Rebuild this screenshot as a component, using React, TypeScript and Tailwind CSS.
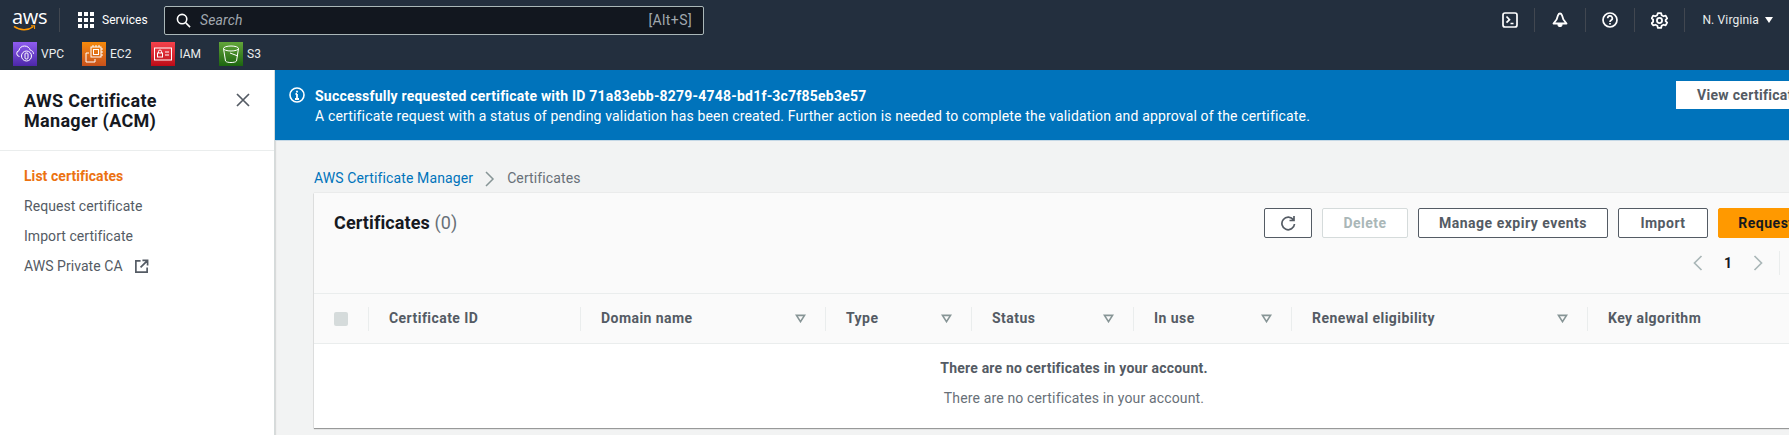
const font = "font-['Roboto','Open_Sans',sans-serif]";

const services = [
  { name: "VPC", bg: "bg-gradient-to-t from-[#4d27a8] to-[#8f5cf0]", gap: "mr-[18px]", icon: "vpc" },
  { name: "EC2", bg: "bg-gradient-to-t from-[#c8511b] to-[#f58a0a]", gap: "mr-[20px]", icon: "ec2" },
  { name: "IAM", bg: "bg-gradient-to-t from-[#bd0816] to-[#f5414b]", gap: "mr-[18px]", icon: "iam" },
  { name: "S3", bg: "bg-gradient-to-t from-[#1b660f] to-[#62a53a]", gap: "", icon: "s3" },
];

const columns = [
  { label: "Certificate ID", width: "w-[212px]", filter: false },
  { label: "Domain name", width: "w-[245px]", filter: true },
  { label: "Type", width: "w-[146px]", filter: true },
  { label: "Status", width: "w-[162px]", filter: true },
  { label: "In use", width: "w-[158px]", filter: true },
  { label: "Renewal eligibility", width: "w-[296px]", filter: true },
  { label: "Key algorithm", width: "w-[200px]", filter: false },
];

const ServiceIcon = ({ kind }: { kind: string }) => {
  if (kind === "vpc")
    return (
      <svg viewBox="0 0 24 24" className="w-6 h-6" fill="none" stroke="white" strokeWidth="1">
        <path d="M6.5 14.5A3 3 0 0 1 6 8.6C6.4 5.8 8.6 4 11.5 4c2.8 0 5 1.7 5.8 4.2 2 .4 3.2 1.8 3.2 3.6" />
        <circle cx="13.5" cy="14" r="5" />
        <rect x="12" y="11" width="3" height="6" rx="1" />
      </svg>
    );
  if (kind === "ec2")
    return (
      <svg viewBox="0 0 24 24" className="w-6 h-6" fill="none" stroke="white" strokeWidth="1">
        <rect x="9" y="5" width="10" height="10" />
        <rect x="11.5" y="7.5" width="5" height="5" />
        <path d="M7 11H4v9h9v-3" />
        <path d="M11 3v2M14 3v2M17 3v2M19 7h2M19 10h2M19 13h2" />
      </svg>
    );
  if (kind === "iam")
    return (
      <svg viewBox="0 0 24 24" className="w-6 h-6" fill="none" stroke="white" strokeWidth="1">
        <rect x="3.5" y="6" width="17" height="12" />
        <rect x="6.5" y="11" width="5" height="4" />
        <path d="M7.5 11V9.5a1.5 1.5 0 0 1 3 0V11M14 10h4M14 13h4" />
      </svg>
    );
  return (
    <svg viewBox="0 0 24 24" className="w-6 h-6" fill="none" stroke="white" strokeWidth="1">
      <ellipse cx="12" cy="6.5" rx="7.5" ry="2.5" />
      <path d="M4.5 6.5 6.5 19c.5 1 3 1.5 5.5 1.5s5-.5 5.5-1.5l2-12.5" />
      <path d="M11 11l8 3" />
    </svg>
  );
};

const FilterCaret = () => (
  <svg viewBox="0 0 12 10" className="w-[11px] h-[9px]" fill="none" stroke="#879596" strokeWidth="1.8">
    <path d="M1.5 1.5h9L6 8.5z" />
  </svg>
);

const Button = ({ label, className }: { label: string; className: string }) => (
  <button className={`h-[30px] rounded-[2px] border text-[14px] font-bold tracking-[0.5px] ${className}`}>{label}</button>
);

export default function App() {
  return (
    <div className={`w-[1789px] h-[435px] overflow-hidden flex flex-col bg-[#f2f3f3] text-[14px] tracking-[0.15px] ${font}`}>
      <header className="h-[70px] shrink-0 bg-[#232f3e] text-white flex flex-col">
        <div className="h-[40px] flex items-center">
          <div className="w-[60px] h-[24px] pl-[12px] border-r border-[#414750] flex flex-col">
            <span className="text-[20px] leading-[17px] tracking-[-0.3px] font-['Open_Sans',sans-serif]">aws</span>
            <svg viewBox="0 0 26 8" className="w-[25px] h-[8px]" fill="none">
              <path d="M1 1.5c7 5 16 5 22 .5" stroke="#ff9900" strokeWidth="1.7" />
              <path d="M20.5 1h4v3.5" stroke="#ff9900" strokeWidth="1.2" />
            </svg>
          </div>
          <div className="ml-[18px] grid grid-cols-3 gap-[2px] w-[16px]">
            {Array.from({ length: 9 }).map((_, i) => (
              <span key={i} className="w-[4px] h-[4px] bg-white" />
            ))}
          </div>
          <span className="ml-[8px] w-[62px] text-[12px] tracking-[0.05px]">Services</span>
          <div className="w-[540px] h-[29px] border border-[#aab7b8] rounded-[2px] flex items-center px-[11px] bg-[#12171f]">
            <svg viewBox="0 0 16 16" className="w-[15px] h-[15px]" fill="none" stroke="white" strokeWidth="1.7">
              <circle cx="6.5" cy="6.5" r="5" />
              <path d="M10.5 10.5 15 15" />
            </svg>
            <span className="ml-[9px] italic text-[#a0a7ae]">Search</span>
            <span className="ml-auto text-[#a0a7ae] tracking-[0.4px]">[Alt+S]</span>
          </div>
          <div className="ml-auto flex items-center">
            <div className="w-[50px] h-[24px] flex items-center justify-center border-r border-[#414750]">
              <svg viewBox="0 0 16 16" className="w-[16px] h-[16px]" fill="none" stroke="white" strokeWidth="1.7">
                <rect x="1" y="1" width="14" height="14" rx="2" />
                <path d="m4.5 4.5 3 3.2-3 3M8.5 11.5h3" />
              </svg>
            </div>
            <div className="w-[51px] h-[24px] flex items-center justify-center border-r border-[#414750]">
              <svg viewBox="0 0 16 16" className="w-[16px] h-[16px]" fill="none" stroke="white" strokeWidth="1.8">
                <path d="M8 1.5c-1 0-1.5.6-2 1.8L4.6 7.5 1.5 11.5h13l-3.1-4L10 3.3C9.5 2.1 9 1.5 8 1.5z" strokeLinejoin="round" />
                <path d="M5.8 12.5a2.2 2.2 0 0 0 4.4 0z" fill="white" strokeWidth="1" />
              </svg>
            </div>
            <div className="w-[49px] h-[24px] flex items-center justify-center border-r border-[#414750]">
              <svg viewBox="0 0 16 16" className="w-[16px] h-[16px]" fill="none" stroke="white" strokeWidth="1.7">
                <circle cx="8" cy="8" r="7" />
                <path d="M5.7 6.2a2.3 2.3 0 1 1 3.4 2c-.8.5-1.1.9-1.1 1.8" />
                <path d="M8 11v1.5" />
              </svg>
            </div>
            <div className="w-[50px] h-[24px] flex items-center justify-center border-r border-[#414750]">
              <svg viewBox="0 0 16 16" className="w-[17px] h-[17px]" fill="none" stroke="white" strokeWidth="1.7">
                <path d="M6.5 1h3l.5 2 1.8 1 2-.6 1.4 2.6-1.4 1.4v1.2l1.4 1.4-1.4 2.6-2-.6-1.8 1-.5 2h-3l-.5-2-1.8-1-2 .6L.6 10.6 2 9.2V7L.6 6l1.4-2.6 2 .6L5.8 3z" strokeLinejoin="round" />
                <circle cx="8" cy="8" r="2.4" />
              </svg>
            </div>
            <span className="ml-[17px] text-[12px] text-[#eaeded]">N. Virginia</span>
            <span className="ml-[6px] mr-[16px] w-0 h-0 border-x-[4px] border-x-transparent border-t-[6px] border-t-white" />
          </div>
        </div>
        <div className="h-[30px] flex items-start pl-[13px] pt-[2px]">
          {services.map((s) => (
            <div key={s.name} className={`flex items-center ${s.gap}`}>
              <span className={`w-6 h-6 ${s.bg}`}>
                <ServiceIcon kind={s.icon} />
              </span>
              <span className="ml-[4px] text-[12px] tracking-normal text-[#eaeded]">{s.name}</span>
            </div>
          ))}
        </div>
      </header>

      <div className="flex-1 flex min-h-0">
        <aside className="w-[275px] shrink-0 bg-white border-r border-[#d5dbdb] shadow-[1px_0_1px_rgba(0,0,0,0.1)]">
          <div className="h-[81px] pl-[24px] pr-[23px] pt-[21px] border-b border-[#eaeded] flex justify-between">
            <h2 className="text-[18px] leading-[20px] font-bold tracking-[0.3px] text-[#16191f]">
              AWS Certificate
              <br />
              Manager (ACM)
            </h2>
            <svg viewBox="0 0 16 16" className="w-[16px] h-[16px] mt-[1px]" fill="none" stroke="#545b64" strokeWidth="1.7">
              <path d="m2 2 12 12M14 2 2 14" />
            </svg>
          </div>
          <nav className="pl-[24px] pt-[10px] flex flex-col tracking-[0.05px] text-[#545b64]">
            <a className="h-[30px] leading-[30px] font-bold text-[#ec7211]">List certificates</a>
            <a className="h-[30px] leading-[30px]">Request certificate</a>
            <a className="h-[30px] leading-[30px]">Import certificate</a>
            <a className="h-[30px] leading-[30px] flex items-center">
              AWS Private CA
              <svg viewBox="0 0 16 16" className="w-[15px] h-[15px] ml-[11px]" fill="none" stroke="#545b64" strokeWidth="1.8">
                <path d="M7 2H2v12h12V9M9 1.5h5.5V7M14.5 1.5 7 9" />
              </svg>
            </a>
          </nav>
        </aside>

        <main className="flex-1 min-w-0 overflow-hidden">
          <div className="h-[71px] bg-[#0073bb] text-white flex border-b border-[#c5d8e6] pl-[14px] pt-[16px] relative">
            <svg viewBox="0 0 16 16" className="w-[16px] h-[16px] mt-[1px]" fill="none" stroke="white" strokeWidth="1.6">
              <circle cx="8" cy="8" r="7" />
              <path d="M8 7v5M6 12h4M8 3.8v1.8M6.5 7H8" strokeWidth="1.8" />
            </svg>
            <div className="ml-[10px] leading-[20px]">
              <div className="font-bold tracking-[0.21px]">Successfully requested certificate with ID 71a83ebb-8279-4748-bd1f-3c7f85eb3e57</div>
              <div className="tracking-[0.165px]">A certificate request with a status of pending validation has been created. Further action is needed to complete the validation and approval of the certificate.</div>
            </div>
            <button className="absolute left-[1401px] top-[11px] w-[140px] h-[28px] bg-white text-[#545b64] font-bold text-left pl-[21px] whitespace-nowrap tracking-[0.3px]">
              View certificate
            </button>
          </div>

          <div className="pl-[39px]">
            <div className="h-[52px] pt-[23px] flex items-center tracking-[0.12px]">
              <span className="text-[#0073bb]">AWS Certificate Manager</span>
              <svg viewBox="0 0 12 16" className="w-[12px] h-[16px] ml-[11px] mr-[11px]" fill="none" stroke="#879596" strokeWidth="1.5">
                <path d="m2 1 7 7-7 7" />
              </svg>
              <span className="text-[#687078]">Certificates</span>
            </div>

            <section className="w-[1600px] h-[235px] bg-white shadow-[0_1px_1px_rgba(0,0,0,0.35),0_0_1px_rgba(0,0,0,0.2)] flex flex-col">
              <div className="h-[101px] bg-[#fafafa] border-b border-[#eaeded] pl-[20px] flex">
                <h1 className="w-[930px] pt-[18px] text-[18px] leading-[24px] font-bold tracking-[0.1px] text-[#16191f]">
                  Certificates <span className="font-normal text-[#687078]">(0)</span>
                </h1>
                <div className="pt-[15px] flex flex-col">
                  <div className="flex gap-[10px]">
                    <button className="w-[48px] h-[30px] border border-[#545b64] rounded-[2px] flex items-center justify-center bg-white">
                      <svg viewBox="0 0 16 16" className="w-[16px] h-[16px]" fill="none" stroke="#545b64" strokeWidth="1.7">
                        <path d="M13.5 5A6.3 6.3 0 1 0 14.5 9M14 1v4.5H9.5" />
                      </svg>
                    </button>
                    <Button label="Delete" className="w-[86px] border-[#d5dbdb] text-[#aab7b8] bg-white" />
                    <Button label="Manage expiry events" className="w-[190px] border-[#545b64] text-[#545b64] bg-white" />
                    <Button label="Import" className="w-[90px] border-[#545b64] text-[#545b64] bg-white" />
                    <Button label="Request certificate" className="w-[170px] border-[#ff9900] bg-[#ff9900] text-[#16191f]" />
                  </div>
                  <div className="mt-[13px] h-[24px] pl-[429px] flex items-center">
                    <svg viewBox="0 0 10 16" className="w-[10px] h-[16px]" fill="none" stroke="#aab7b8" strokeWidth="1.7">
                      <path d="M8.5 1 1.5 8l7 7" />
                    </svg>
                    <span className="ml-[21px] w-[12px] font-bold text-[#16191f]">1</span>
                    <svg viewBox="0 0 10 16" className="ml-[17px] w-[10px] h-[16px]" fill="none" stroke="#aab7b8" strokeWidth="1.7">
                      <path d="m1.5 1 7 7-7 7" />
                    </svg>
                    <span className="ml-[16px] h-[24px] border-l border-[#eaeded]" />
                  </div>
                </div>
              </div>
              <div className="h-[50px] bg-[#fafafa] border-b border-[#eaeded] flex items-center pl-[20px] font-bold tracking-[0.45px] text-[#545b64]">
                <span className="w-[14px] h-[14px] rounded-[2px] bg-[#d5dbdb] shrink-0" />
                <div className="ml-[20px] flex items-center">
                  {columns.map((c) => (
                    <div key={c.label} className={`${c.width} h-[24px] pl-[20px] pr-[19px] border-l border-[#eaeded] flex items-center justify-between whitespace-nowrap`}>
                      <span>{c.label}</span>
                      {c.filter && <FilterCaret />}
                    </div>
                  ))}
                </div>
              </div>
              <div className="flex-1 w-[1520px] flex flex-col items-center pt-[13px] text-center">
                <div className="font-bold tracking-[0.2px] text-[#545b64] leading-[22px]">There are no certificates in your account.</div>
                <div className="mt-[8px] text-[#687078] leading-[22px]">There are no certificates in your account.</div>
              </div>
            </section>
          </div>
        </main>
      </div>
    </div>
  );
}
